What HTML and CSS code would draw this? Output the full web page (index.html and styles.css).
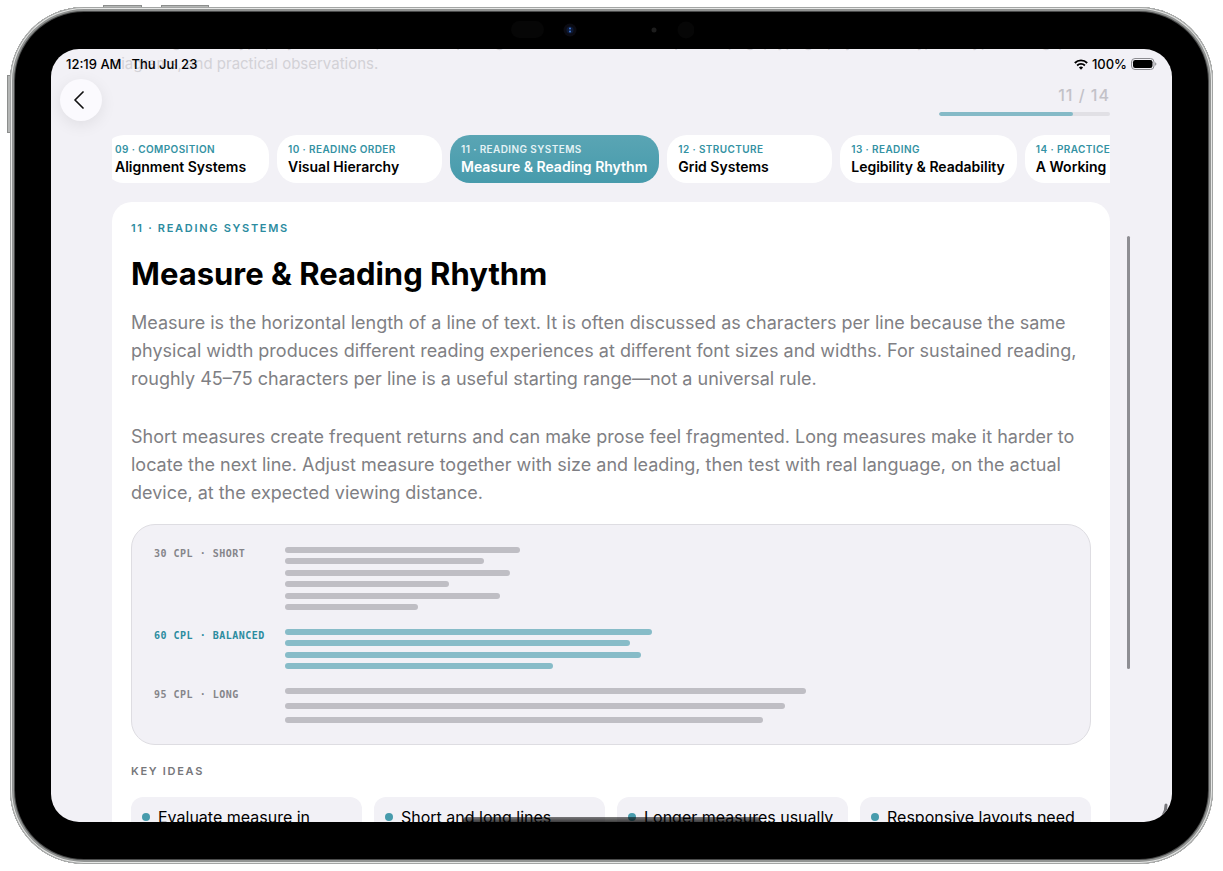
FILE: index.html
```html
<!DOCTYPE html>
<html lang="en">
<head>
<meta charset="utf-8">
<meta name="viewport" content="width=device-width, initial-scale=1">
<title>Measure &amp; Reading Rhythm</title>
<link rel="stylesheet" href="styles.css">
</head>
<body>
<div class="device">
  <span class="key key-up"></span><span class="key key-down"></span><span class="key key-power"></span>
  <div class="frame">
    <svg class="sensors" width="184" height="20" viewBox="0 0 184 20" aria-hidden="true">
      <rect x="1" y="1" width="33" height="17" rx="8.500" fill="#060606"/>
      <circle cx="60" cy="10" r="6.500" fill="#0b0b12"/><circle cx="60" cy="10" r="3.500" fill="#0d1a38"/>
      <circle cx="60" cy="8.500" r="1" fill="#3f78d8"/><circle cx="60" cy="11.500" r="1" fill="#3f78d8"/>
      <circle cx="144" cy="10" r="2.500" fill="#1d1d1d"/><circle cx="176" cy="10" r="8.500" fill="#060606"/>
    </svg>
    <div class="screen">
      <header class="status">
        <div class="status-group"><span>12:19 AM</span><span>Thu Jul 23</span></div>
        <div class="status-group status-right">
          <svg width="14" height="11" viewBox="0 0 14 11" aria-hidden="true"><g fill="none" stroke="#000" stroke-width="1.800"><path d="M.8 4a8.800 8.800 0 0 1 12.400 0"/><path d="M3.100 6.500a5.500 5.500 0 0 1 7.800 0"/></g><path d="M7 10.800 4.900 8.600a3 3 0 0 1 4.200 0z"/></svg>
          <span>100%</span>
          <svg width="26" height="12" viewBox="0 0 26 12" aria-hidden="true"><rect x=".5" y=".5" width="22.500" height="11" rx="3.500" fill="none" stroke="#8b8b90"/><rect x="2" y="2" width="19.500" height="8" rx="2.200"/><path d="M24.200 4.200c1.600.6 1.600 3 0 3.600z" fill="#8b8b90"/></svg>
        </div>
      </header>
      <button class="back" type="button" aria-label="Back"><svg width="12" height="18" viewBox="0 0 12 18" aria-hidden="true"><path d="M10 1 2 9l8 8" fill="none" stroke="#111" stroke-width="1.700" stroke-linecap="round" stroke-linejoin="round"/></svg></button>
      <main class="page">
        <div class="intro-clip"><p class="intro">A visual guide to type, style and form, from the spacing of a headline to the shape of a page, typography for clarity, with type settings, drawings and<br>diagrams, and practical observations.</p></div>
        <div class="progress"><label for="progress">11 / 14</label><progress id="progress" max="14" value="11">11 / 14</progress></div>
        <nav class="chips" aria-label="Chapters">
          <div class="chip-track">
            <button class="chip" type="button"><small>09 · COMPOSITION</small><b>Alignment Systems</b></button>
            <button class="chip" type="button"><small>10 · READING ORDER</small><b>Visual Hierarchy</b></button>
            <button class="chip chip-on" type="button" aria-current="true"><small>11 · READING SYSTEMS</small><b>Measure &amp; Reading Rhythm</b></button>
            <button class="chip" type="button"><small>12 · STRUCTURE</small><b>Grid Systems</b></button>
            <button class="chip" type="button"><small>13 · READING</small><b>Legibility &amp; Readability</b></button>
            <button class="chip" type="button"><small>14 · PRACTICE</small><b>A Working System</b></button>
          </div>
        </nav>
        <article class="card">
          <p class="eyebrow">11 · READING SYSTEMS</p>
          <h1>Measure &amp; Reading Rhythm</h1>
          <p class="body">Measure is the horizontal length of a line of text. It is often discussed as characters per line because the same physical width produces different reading experiences at different font sizes and widths. For sustained reading, roughly 45–75 characters per line is a useful starting range—not a universal rule.</p>
          <p class="body">Short measures create frequent returns and can make prose feel fragmented. Long measures make it harder to locate the next line. Adjust measure together with size and leading, then test with real language, on the actual device, at the expected viewing distance.</p>
          <section class="chart" aria-label="Line lengths">
            <span class="chart-label">30 CPL · SHORT</span>
            <div class="bars bars-short"><i style="width:30%"></i><i style="width:25.4%"></i><i style="width:28.7%"></i><i style="width:20.9%"></i><i style="width:27.4%"></i><i style="width:17%"></i></div>
            <span class="chart-label accent">60 CPL · BALANCED</span>
            <div class="bars bars-balanced"><i style="width:46.9%"></i><i style="width:44%"></i><i style="width:45.5%"></i><i style="width:34.2%"></i></div>
            <span class="chart-label">95 CPL · LONG</span>
            <div class="bars bars-long"><i style="width:66.6%"></i><i style="width:63.8%"></i><i style="width:61.1%"></i></div>
          </section>
          <h2>KEY IDEAS</h2>
          <ul class="ideas"><li>Evaluate measure in</li><li>Short and long lines</li><li>Longer measures usually</li><li>Responsive layouts need</li></ul>
        </article>
      </main>
      <span class="scrollbar"></span>
      <svg class="corner-mark" width="20" height="20" viewBox="0 0 20 20" aria-hidden="true"><path d="M16 3C16 11 12 17 5 20" fill="none" stroke="#77777b" stroke-width="3" stroke-linecap="round"/></svg>
      <span class="home"></span>
    </div>
  </div>
</div>
</body>
</html>
```
FILE: styles.css
```css
* { box-sizing: border-box; }
body { margin: 0; background: #fff; font-family: Inter, "Liberation Sans", sans-serif; color: #000; }
p, h1, h2, ul { margin: 0; padding: 0; }
button { font: inherit; border: 0; cursor: pointer; }

.device { position: relative; height: 100vh; padding: 7px 10px 7px; }
.key { position: absolute; background: #b4b6b5; border: 1px solid #8c8e8d; }
.key-up { left: 103px; top: 5px; width: 39px; height: 4px; }
.key-down { left: 161px; top: 5px; width: 48px; height: 4px; }
.key-power { left: 7px; top: 75px; width: 4px; height: 58px; }
.frame {
  position: relative; height: 100%; padding: 42px 41px; border-radius: 74px; background: #000;
  box-shadow: inset 0 0 0 1px #a3a5a4, inset 0 0 0 2px #e6e7e6, inset 0 0 0 4px #929493, inset 0 0 0 5px #4a4b4b;
}
.sensors { position: absolute; left: 500px; top: 13px; }
.screen { position: relative; height: 100%; overflow: hidden; border-radius: 28px; background: #f2f1f6; }

.status { position: absolute; z-index: 2; top: 6px; left: 15px; right: 15px; display: flex; justify-content: space-between; font-size: 13px; font-weight: 500; line-height: 18px; }
.status-group { display: flex; align-items: center; gap: 10px; }
.status-right { gap: 4px; }
.back { position: absolute; z-index: 2; left: 9px; top: 30px; width: 42px; height: 42px; padding: 0 4px 0 0; display: grid; place-items: center; border-radius: 50%; background: #fbfafe; box-shadow: 0 4px 16px rgba(0, 0, 0, .08); }

.page { padding: 0 62px 0 61px; }
.intro-clip { height: 34px; display: flex; align-items: flex-end; overflow: hidden; white-space: nowrap; }
.intro { padding-bottom: 8px; font-size: 15px; line-height: 22px; color: #d3d2d7; }
.progress { display: flex; flex-direction: column; align-items: flex-end; gap: 7px; padding-bottom: 19px; }
.progress label { margin-top: 2px; font-size: 16px; font-weight: 500; line-height: 20px; letter-spacing: 1px; color: #c3c2c8; }
progress { appearance: none; display: block; width: 171px; height: 4px; border: 0; border-radius: 2px; overflow: hidden; background: #e1e0e5; }
progress::-webkit-progress-bar { background: #e1e0e5; }
progress::-webkit-progress-value { background: #85bac7; border-radius: 2px; }

.chips { overflow: hidden; }
.chip-track { display: flex; gap: 8px; margin-left: -8px; }
.chip { flex: none; display: flex; flex-direction: column; align-items: flex-start; min-width: 165px; padding: 6px 12px 6px 11px; border-radius: 20px; background: #fff; color: #000; white-space: nowrap; }
.chip small { font-size: 10px; font-weight: 600; line-height: 16px; color: #3492a3; letter-spacing: 0.4px; }
.chip b { font-size: 14px; font-weight: 600; line-height: 20px; }
.chip-on { background: linear-gradient(#5aa5b4, #479bac); color: #fff; }
.chip-on small { color: #e4f2f5; }

.card { margin-top: 19px; padding: 17px 19px 20px; border-radius: 20px 20px 0 0; background: #fff; }
.eyebrow { font-size: 11px; font-weight: 600; line-height: 18px; letter-spacing: 1.7px; color: #2c8c9f; }
h1 { margin: 17px 0 15px; font-size: 31px; font-weight: 700; line-height: 40px; }
.body { font-size: 18px; line-height: 28px; color: #7f7f84; }
.body + .body { margin-top: 30px; }
.chart { display: grid; grid-template-columns: 131px 1fr; row-gap: 19px; margin-top: 17px; padding: 22px 22px 21px; border: 1px solid #dedde2; border-radius: 24px; background: #f2f1f6; }
.chart-label { font: 700 10px/14px "DejaVu Sans Mono", monospace; letter-spacing: 0.5px; color: #85858a; }
.chart-label.accent { color: #2c8c9f; }
.bars { display: flex; flex-direction: column; justify-content: space-between; }
.bars i { height: 6px; border-radius: 3px; background: #bfbec4; }
.bars-short { height: 63px; }
.bars-balanced { height: 40px; }
.bars-balanced i { background: #87bcc8; }
.bars-long { height: 35px; }
h2 { margin: 17px 0; font-size: 11px; font-weight: 600; line-height: 18px; letter-spacing: 1.7px; color: #77777b; }
.ideas { display: grid; grid-template-columns: repeat(4, 1fr); gap: 12px; list-style: none; }
.ideas li { display: flex; align-items: center; gap: 8px; padding: 9px 11px 11px; border-radius: 12px; background: #f2f1f6; font-size: 16px; line-height: 22px; white-space: nowrap; }
.ideas li::before { content: ""; flex: none; width: 8px; height: 8px; border-radius: 50%; background: #479bac; }

.scrollbar { position: absolute; right: 42px; top: 187px; width: 3px; height: 433px; border-radius: 2px; background: #8e8e93; }
.corner-mark { position: absolute; right: 2px; bottom: 0; }
.home { position: absolute; left: 50%; bottom: 0; width: 297px; height: 5px; margin-left: -149px; border-radius: 3px 3px 0 0; background: linear-gradient(rgba(0, 0, 0, .5), rgba(0, 0, 0, .75)); }
```
